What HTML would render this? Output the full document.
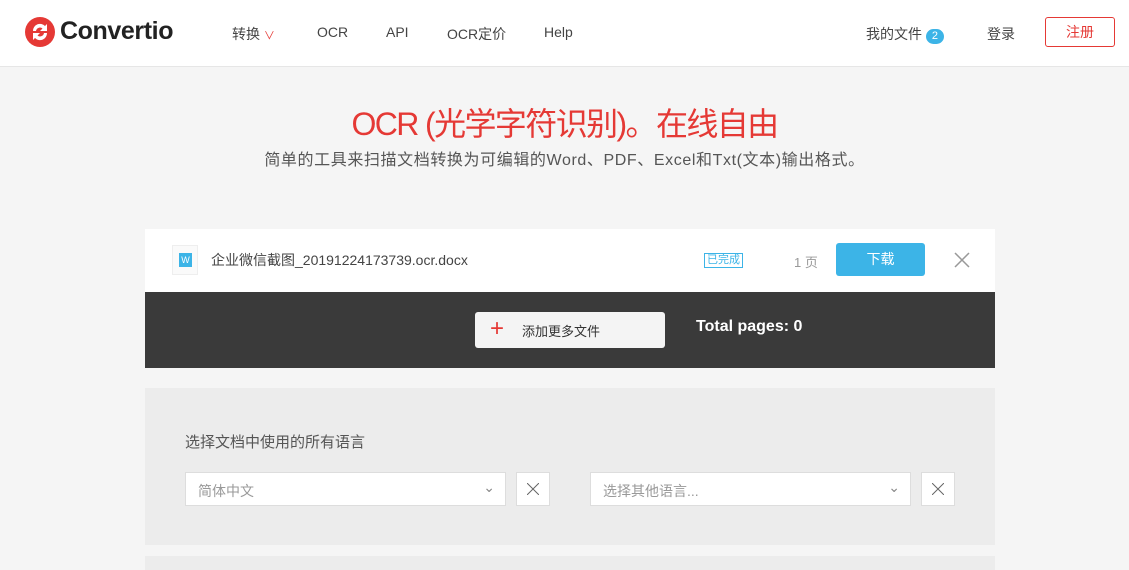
<!DOCTYPE html>
<html><head><meta charset="utf-8"><style>
*{margin:0;padding:0;box-sizing:border-box}
body{width:1129px;height:570px;overflow:hidden;background:#f5f5f5;font-family:"Liberation Sans","Noto Sans CJK SC",sans-serif;position:relative;color:#333}
.hdr{position:absolute;left:0;top:0;width:1129px;height:67px;background:#fff;border-bottom:1px solid #e6e6e6}
.a{position:absolute;white-space:nowrap}
.nav{font-size:14px;color:#444;top:24px}
</style></head><body>
<div class="hdr">
<svg class="a" style="left:25px;top:17px" width="30" height="30" viewBox="0 0 30 30"><circle cx="15" cy="15" r="15" fill="#e53935"/><path d="M8 14a7 7 0 0 1 12-5l2-2v7h-7l2.5-2.5A4 4 0 0 0 11 14z" fill="#fff"/><path d="M22 16a7 7 0 0 1-12 5l-2 2v-7h7l-2.5 2.5A4 4 0 0 0 19 16z" fill="#fff"/></svg>
<div class="a" style="left:60px;top:17px;font-size:25px;font-weight:bold;color:#222;letter-spacing:-0.4px">Convertio</div>
<div class="a nav" style="left:232px">转换 <span style="color:#e53935;font-size:11px">&#8744;</span></div>
<div class="a nav" style="left:317px">OCR</div>
<div class="a nav" style="left:386px">API</div>
<div class="a nav" style="left:447px">OCR定价</div>
<div class="a nav" style="left:544px">Help</div>
<div class="a nav" style="left:866px">我的文件 <span style="display:inline-block;background:#3cb4e7;color:#fff;border-radius:8px;font-size:11px;padding:0 6px;line-height:15px">2</span></div>
<div class="a nav" style="left:987px">登录</div>
<div class="a" style="left:1045px;top:17px;width:70px;height:30px;border:1px solid #e53935;border-radius:3px;color:#e53935;font-size:14px;text-align:center;line-height:28px">注册</div>
</div>
<div class="a" style="left:0;width:1129px;top:99px;text-align:center;font-size:32px;color:#e53935;letter-spacing:-1.6px">OCR (光学字符识别)。在线自由</div>
<div class="a" style="left:0;width:1129px;top:146px;text-align:center;font-size:16px;color:#555;letter-spacing:0.6px">简单的工具来扫描文档转换为可编辑的Word、PDF、Excel和Txt(文本)输出格式。</div>
<div class="a" style="left:145px;top:229px;width:850px;height:63px;background:#fff"></div>
<div class="a" style="left:172px;top:245px;width:26px;height:30px;background:#fafafa;border:1px solid #eee"><div style="margin:7px 0 0 6px;width:13px;height:14px;background:#3cb4e7;color:#fff;font-size:9px;text-align:center;line-height:14px">W</div></div>
<div class="a" style="left:211px;top:250px;font-size:14px;color:#444">企业微信截图_20191224173739.ocr.docx</div>
<div class="a" style="left:704px;top:253px;border:1px solid #3cb4e7;color:#3cb4e7;font-size:11px;padding:0 2px;line-height:13px">已完成</div>
<div class="a" style="left:794px;top:252px;font-size:13px;color:#999">1 页</div>
<div class="a" style="left:836px;top:243px;width:89px;height:33px;background:#3cb4e7;border-radius:3px;color:#fff;font-size:14px;text-align:center;line-height:32px">下载</div>
<svg class="a" style="left:954px;top:252px" width="16" height="16"><path d="M1 1L15 15M15 1L1 15" stroke="#999" stroke-width="1.5"/></svg>
<div class="a" style="left:145px;top:292px;width:850px;height:76px;background:#3a3a3a"></div>
<div class="a" style="left:475px;top:312px;width:190px;height:36px;background:#f4f4f4;border-radius:3px"></div>
<div class="a" style="left:490px;top:317px;font-size:24px;color:#e53935;line-height:24px">+</div>
<div class="a" style="left:522px;top:321px;font-size:13px;color:#333">添加更多文件</div>
<div class="a" style="left:696px;top:318px;font-size:16px;font-weight:bold;color:#fff">Total pages: 0</div>
<div class="a" style="left:145px;top:388px;width:850px;height:157px;background:#ececec"></div>
<div class="a" style="left:185px;top:431px;font-size:15px;color:#555">选择文档中使用的所有语言</div>
<div class="a" style="left:185px;top:472px;width:321px;height:34px;background:#fff;border:1px solid #ddd;font-size:14px;color:#999;padding:8px 12px">简体中文<span style="position:absolute;right:10px;top:6px;color:#888">&#8964;</span></div>
<div class="a" style="left:516px;top:472px;width:34px;height:34px;background:#fff;border:1px solid #ddd"><svg style="margin:10px" width="12" height="12"><path d="M0 0L12 12M12 0L0 12" stroke="#666"/></svg></div>
<div class="a" style="left:590px;top:472px;width:321px;height:34px;background:#fff;border:1px solid #ddd;font-size:14px;color:#999;padding:8px 12px">选择其他语言...<span style="position:absolute;right:10px;top:6px;color:#888">&#8964;</span></div>
<div class="a" style="left:921px;top:472px;width:34px;height:34px;background:#fff;border:1px solid #ddd"><svg style="margin:10px" width="12" height="12"><path d="M0 0L12 12M12 0L0 12" stroke="#666"/></svg></div>
<div class="a" style="left:145px;top:556px;width:850px;height:14px;background:#ececec"></div>
</body></html>
